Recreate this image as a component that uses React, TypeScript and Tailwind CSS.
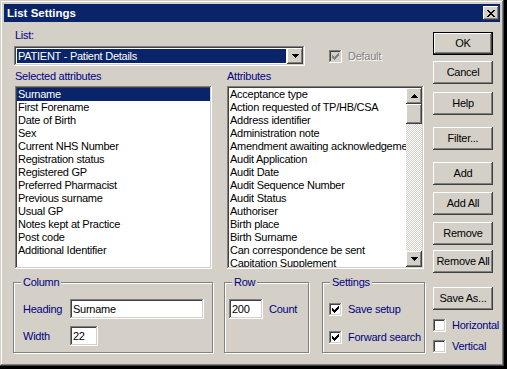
import React from "react";

const raised =
  "shadow-[inset_-1px_-1px_#404040,inset_1px_1px_#ffffff,inset_-2px_-2px_#808080,inset_2px_2px_#d4d0c8]";
const sunken =
  "shadow-[inset_-1px_-1px_#ffffff,inset_1px_1px_#808080,inset_-2px_-2px_#d4d0c8,inset_2px_2px_#404040]";
const etched = "border border-[#808080] shadow-[inset_1px_1px_#ffffff,1px_1px_#ffffff]";

const selected = [
  "Surname",
  "First Forename",
  "Date of Birth",
  "Sex",
  "Current NHS Number",
  "Registration status",
  "Registered GP",
  "Preferred Pharmacist",
  "Previous surname",
  "Usual GP",
  "Notes kept at Practice",
  "Post code",
  "Additional Identifier",
];

const attributes = [
  "Acceptance type",
  "Action requested of TP/HB/CSA",
  "Address identifier",
  "Administration note",
  "Amendment awaiting acknowledgement",
  "Audit Application",
  "Audit Date",
  "Audit Sequence Number",
  "Audit Status",
  "Authoriser",
  "Birth place",
  "Birth Surname",
  "Can correspondence be sent",
  "Capitation Supplement",
];

const Arrow = ({ up }: { up?: boolean }) => {
  const rows = up ? [3, 2, 1, 0] : [0, 1, 2, 3];
  return (
    <svg width="7" height="4" viewBox="0 0 7 4" shapeRendering="crispEdges">
      {rows.map((inset, y) => (
        <rect key={y} x={inset} y={y} width={7 - inset * 2} height="1" fill="#000" />
      ))}
    </svg>
  );
};

const CloseGlyph = () => {
  const pix: [number, number][] = [
    [0, 0], [1, 0], [6, 0], [7, 0],
    [1, 1], [2, 1], [5, 1], [6, 1],
    [2, 2], [3, 2], [4, 2], [5, 2],
    [3, 3], [4, 3],
    [2, 4], [3, 4], [4, 4], [5, 4],
    [1, 5], [2, 5], [5, 5], [6, 5],
    [0, 6], [1, 6], [6, 6], [7, 6],
  ];
  return (
    <svg width="8" height="7" viewBox="0 0 8 7" shapeRendering="crispEdges">
      {pix.map(([x, y]) => (
        <rect key={`${x}-${y}`} x={x} y={y} width="1" height="1" fill="#000" />
      ))}
    </svg>
  );
};

const Check = ({ checked, disabled }: { checked?: boolean; disabled?: boolean }) => (
  <div
    className={`w-[13px] h-[13px] shrink-0 flex items-center justify-center ${sunken} ${
      disabled ? "bg-[#d4d0c8]" : "bg-white"
    }`}
  >
    {checked && (
      <svg width="7" height="7" viewBox="0 0 7 7" shapeRendering="crispEdges">
        {[2, 3, 4, 3, 2, 1, 0].map((y, x) => (
          <rect key={x} x={x} y={y} width="1" height="3" fill={disabled ? "#808080" : "#000"} />
        ))}
      </svg>
    )}
  </div>
);

const Btn = ({ label, className, isDefault }: { label: string; className: string; isDefault?: boolean }) => (
  <div
    className={`w-[60px] h-[23px] flex items-center justify-center text-black bg-[#d4d0c8] whitespace-nowrap ${raised} ${
      isDefault ? "border border-black" : ""
    } ${className}`}
  >
    {label}
  </div>
);

const Group = ({ title, className, children }: { title: string; className: string; children: React.ReactNode }) => (
  <div className={`relative h-[71px] ${etched} ${className}`}>
    <span className="absolute -top-[7px] left-[7px] px-[2px] bg-[#d4d0c8] text-[#000080] leading-[13px]">
      {title}
    </span>
    {children}
  </div>
);

export default function App() {
  return (
    <div className="w-[507px] h-[369px] bg-black font-['Liberation_Sans',Arial,sans-serif] text-[11px] leading-[13px] tracking-[-0.25px] select-none">
      <div className="w-[504px] h-[366px] bg-[#d4d0c8] p-[4px] shadow-[inset_-1px_-1px_#404040,inset_1px_1px_#d4d0c8,inset_-2px_-2px_#808080,inset_2px_2px_#ffffff]">
        {/* title bar */}
        <div className="h-[18px] bg-[#0a246a] flex items-center justify-between">
          <span className="pl-[3px] text-white font-bold text-[11.5px] tracking-normal">List Settings</span>
          <div className={`mr-[1px] w-[16px] h-[14px] bg-[#d4d0c8] flex items-center justify-center ${raised}`}>
            <CloseGlyph />
          </div>
        </div>

        <div className="flex pl-[9px]">
          {/* left side */}
          <div className="w-[412px] flex flex-col">
            <div className="mt-[7px] ml-[2px] h-[13px] text-[#000080]">List:</div>
            <div className="mt-[4px] flex items-center">
              <div className={`ml-[1px] w-[291px] h-[20px] flex p-[2px] bg-white ${sunken}`}>
                <div className="flex-1 p-[1px]">
                  <div className="h-full bg-[#0a246a] text-white leading-[14px] pl-[1px]">
                    PATIENT - Patient Details
                  </div>
                </div>
                <div className={`w-[16px] h-full bg-[#d4d0c8] flex items-center justify-center ${raised}`}>
                  <Arrow />
                </div>
              </div>
              <div className="ml-[24px] flex items-center">
                <Check checked disabled />
                <span className="ml-[6px] text-[#808080] [text-shadow:1px_1px_#ffffff]">Default</span>
              </div>
            </div>

            <div className="flex">
              <div className="ml-[2px] w-[197px] flex flex-col">
                <div className="mt-[4px] h-[13px] text-[#000080]">Selected attributes</div>
                <div className={`mt-[3px] h-[183px] bg-white p-[2px] ${sunken}`}>
                  {selected.map((s, i) => (
                    <div
                      key={s}
                      className={`h-[13px] pl-[1px] whitespace-nowrap ${
                        i === 0 ? "bg-[#0a246a] text-white" : "text-black"
                      }`}
                    >
                      {s}
                    </div>
                  ))}
                </div>
              </div>
              <div className="ml-[15px] w-[197px] flex flex-col">
                <div className="mt-[4px] h-[13px] text-[#000080]">Attributes</div>
                <div className={`mt-[3px] h-[183px] bg-white p-[2px] flex ${sunken}`}>
                  <div className="flex-1 overflow-hidden">
                    {attributes.map((s) => (
                      <div key={s} className="h-[13px] pl-[1px] whitespace-nowrap text-black">
                        {s}
                      </div>
                    ))}
                  </div>
                  <div className="w-[16px] flex flex-col bg-[repeating-conic-gradient(#d4d0c8_0_25%,#ffffff_0_50%)] bg-[length:2px_2px]">
                    <div className={`h-[16px] bg-[#d4d0c8] flex items-center justify-center ${raised}`}>
                      <Arrow up />
                    </div>
                    <div className={`h-[20px] bg-[#d4d0c8] ${raised}`} />
                    <div className="flex-1" />
                    <div className={`h-[16px] bg-[#d4d0c8] flex items-center justify-center ${raised}`}>
                      <Arrow />
                    </div>
                  </div>
                </div>
              </div>
            </div>

            <div className="mt-[13px] flex">
              <Group title="Column" className="w-[200px]">
                <div className="pt-[16px] flex flex-col">
                  <div className="flex items-center">
                    <span className="pl-[9px] w-[56px] text-[#000080]">Heading</span>
                    <div className={`w-[134px] h-[20px] bg-white pl-[3px] flex items-center text-black ${sunken}`}>
                      Surname
                    </div>
                  </div>
                  <div className="mt-[7px] flex items-center">
                    <span className="pl-[9px] w-[56px] text-[#000080]">Width</span>
                    <div className={`w-[28px] h-[20px] bg-white pl-[3px] flex items-center text-black ${sunken}`}>
                      22
                    </div>
                  </div>
                </div>
              </Group>
              <Group title="Row" className="ml-[11px] w-[85px]">
                <div className="pt-[16px] pl-[4px] flex items-center">
                  <div className={`w-[34px] h-[20px] bg-white pl-[3px] flex items-center text-black ${sunken}`}>
                    200
                  </div>
                  <span className="ml-[6px] text-[#000080]">Count</span>
                </div>
              </Group>
              <Group title="Settings" className="ml-[13px] w-[103px]">
                <div className="pt-[20px] pl-[6px] flex flex-col">
                  <div className="flex items-center h-[13px]">
                    <Check checked />
                    <span className="ml-[6px] text-[#000080] whitespace-nowrap">Save setup</span>
                  </div>
                  <div className="mt-[15px] flex items-center h-[13px]">
                    <Check checked />
                    <span className="ml-[6px] text-[#000080] whitespace-nowrap">Forward search</span>
                  </div>
                </div>
              </Group>
            </div>
          </div>

          {/* right buttons */}
          <div className="ml-[8px] w-[60px] flex flex-col">
            <Btn label="OK" isDefault className="mt-[10px]" />
            <Btn label="Cancel" className="mt-[6px]" />
            <Btn label="Help" className="mt-[8px]" />
            <Btn label="Filter..." className="mt-[12px]" />
            <Btn label="Add" className="mt-[12px]" />
            <Btn label="Add All" className="mt-[7px]" />
            <Btn label="Remove" className="mt-[7px]" />
            <Btn label="Remove All" className="mt-[5px]" />
            <Btn label="Save As..." className="mt-[14px]" />
            <div className="mt-[9px] flex items-center h-[13px]">
              <Check />
              <span className="ml-[6px] text-[#000080] whitespace-nowrap">Horizontal</span>
            </div>
            <div className="mt-[8px] flex items-center h-[13px]">
              <Check />
              <span className="ml-[6px] text-[#000080] whitespace-nowrap">Vertical</span>
            </div>
          </div>
        </div>
      </div>
    </div>
  );
}
